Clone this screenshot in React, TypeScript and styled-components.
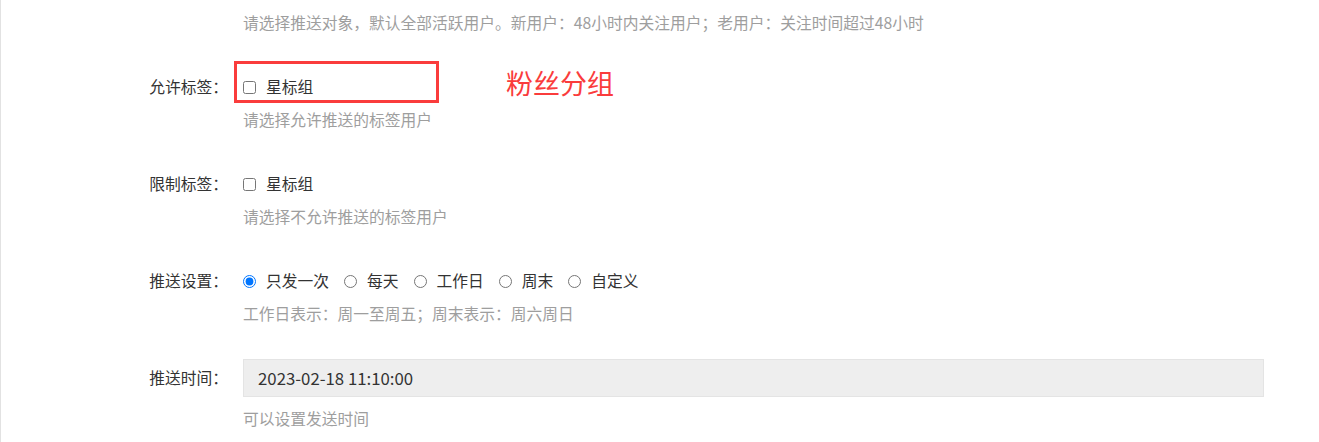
import React from 'react';
import styled, { createGlobalStyle } from 'styled-components';

const GlobalStyle = createGlobalStyle`
  body {
    margin: 0;
    background: #fff;
    font-family: "Noto Sans CJK SC", "Microsoft YaHei", sans-serif;
  }
`;

const FONT = '15.75px';

const App = () => {
  return (
    <>
      <GlobalStyle />
      <Page>
        <Item>
          <Help $gap={0}>请选择推送对象，默认全部活跃用户。新用户：48小时内关注用户；老用户：关注时间超过48小时</Help>
        </Item>

        <Item>
          <Row>
            <Label>允许标签：</Label>
            <Control>
              <Highlight />
              <Option $after={0}>
                <CheckBox type="checkbox" />
                <OptionText $lead={10}>星标组</OptionText>
              </Option>
              <Note>粉丝分组</Note>
            </Control>
          </Row>
          <Help $gap={4}>请选择允许推送的标签用户</Help>
        </Item>

        <Item>
          <Row>
            <Label>限制标签：</Label>
            <Control>
              <Option $after={0}>
                <CheckBox type="checkbox" />
                <OptionText $lead={10}>星标组</OptionText>
              </Option>
            </Control>
          </Row>
          <Help $gap={4}>请选择不允许推送的标签用户</Help>
        </Item>

        <Item>
          <Row>
            <Label>推送设置：</Label>
            <Control>
              {['只发一次', '每天', '工作日', '周末', '自定义'].map((t, i) => (
                <Option key={t} $after={15}>
                  <Radio type="radio" name="push" defaultChecked={i === 0} />
                  <OptionText $lead={10}>{t}</OptionText>
                </Option>
              ))}
            </Control>
          </Row>
          <Help $gap={4}>工作日表示：周一至周五；周末表示：周六周日</Help>
        </Item>

        <Item>
          <Row>
            <Label>推送时间：</Label>
            <Control>
              <DateInput readOnly value="2023-02-18 11:10:00" />
            </Control>
          </Row>
          <Help $gap={12}>可以设置发送时间</Help>
        </Item>
      </Page>
    </>
  );
};

export default App;

// Styled Components
const Page = styled.div`
  box-sizing: border-box;
  min-height: 100vh;
  padding: 13px 55px 0 0;
  border-left: 1px solid #e2e2e2;
`;

const Item = styled.div`
  display: flex;
  flex-direction: column;
  margin-bottom: 35px;
`;

const Row = styled.div`
  display: flex;
  align-items: center;
  height: 38px;
`;

const Label = styled.label`
  width: 227px;
  flex-shrink: 0;
  text-align: right;
  font-size: ${FONT};
  line-height: 20px;
  color: #333;
`;

const Control = styled.div`
  position: relative;
  flex: 1;
  display: flex;
  align-items: center;
  height: 100%;
  margin-left: 15px;
`;

const Option = styled.label<{ $after: number }>`
  display: inline-flex;
  align-items: center;
  margin-right: ${(p) => p.$after}px;
  font-size: ${FONT};
  line-height: 20px;
  color: #333;
`;

const CheckBox = styled.input`
  width: 13px;
  height: 13px;
  margin: 0;
`;

const Radio = styled.input`
  width: 13px;
  height: 13px;
  margin: 0;
`;

const OptionText = styled.span<{ $lead: number }>`
  margin-left: ${(p) => p.$lead}px;
`;

const Help = styled.div<{ $gap: number }>`
  margin: ${(p) => p.$gap}px 0 0 242px;
  font-size: ${FONT};
  line-height: 20px;
  color: #9e9e9e;
`;

const DateInput = styled.input`
  box-sizing: border-box;
  width: 100%;
  height: 38px;
  padding: 0 14px;
  border: 1px solid #e4e4e4;
  background: #eee;
  font-family: inherit;
  font-size: 16.8px;
  color: #333;
  outline: none;
`;

const Highlight = styled.div`
  position: absolute;
  left: -9px;
  top: -7px;
  width: 205px;
  height: 42px;
  box-sizing: border-box;
  border: 3px solid #fa3c3c;
  pointer-events: none;
`;

const Note = styled.div`
  position: absolute;
  left: 263px;
  top: 0;
  font-size: 27px;
  line-height: 30px;
  color: #fa3c3c;
`;
